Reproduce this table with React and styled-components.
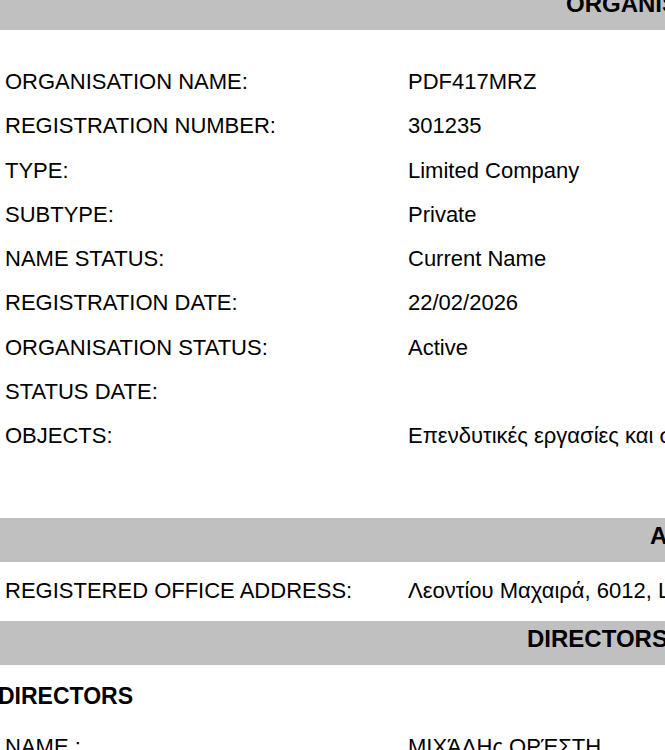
import styled, { createGlobalStyle } from "styled-components";

const GlobalStyle = createGlobalStyle`
  html, body {
    margin: 0;
    padding: 0;
    background: #ffffff;
    overflow: hidden;
  }
  body {
    font-family: "Liberation Sans", Arial, "Noto Sans", sans-serif;
    color: #000000;
  }
`;

const Page = styled.div`
  width: 100%;
  overflow: hidden;
`;

const Bar = styled.div`
  height: 44px;
  box-sizing: border-box;
  background-color: #c0c0c0;
  padding-top: 6px;
  padding-left: ${(p) => p.$inset}px;
  margin-top: ${(p) => p.$offset || 0}px;
  white-space: nowrap;
`;

const BarTitle = styled.span`
  font-size: 24px;
  line-height: 24px;
  font-weight: bold;
`;

const Section = styled.div`
  padding: ${(p) => p.$pad};
`;

const Row = styled.div`
  display: grid;
  grid-template-columns: 403px 1fr;
  padding-left: 5px;
  font-size: 22px;
  line-height: 44.25px;
  white-space: nowrap;
`;

const Label = styled.div``;

const Value = styled.div`
  overflow: hidden;
`;

const SubHeading = styled.div`
  margin: 16px 0 14px -2px;
  font-size: 23px;
  line-height: 30px;
  font-weight: bold;
`;

const organisation = [
  ["ORGANISATION NAME:", "PDF417MRZ"],
  ["REGISTRATION NUMBER:", "301235"],
  ["TYPE:", "Limited Company"],
  ["SUBTYPE:", "Private"],
  ["NAME STATUS:", "Current Name"],
  ["REGISTRATION DATE:", "22/02/2026"],
  ["ORGANISATION STATUS:", "Active"],
  ["STATUS DATE:", ""],
  ["OBJECTS:", "Επενδυτικές εργασίες και συμμετοχές"],
];

const App = () => {
  return (
    <Page>
      <GlobalStyle />
      <Bar $inset={566} $offset={-14}>
        <BarTitle>ORGANISATION DETAILS</BarTitle>
      </Bar>

      <Section $pad="30px 0 60px">
        {organisation.map(([label, value]) => (
          <Row key={label}>
            <Label>{label}</Label>
            <Value>{value}</Value>
          </Row>
        ))}
      </Section>

      <Bar $inset={650}>
        <BarTitle>ADDRESS</BarTitle>
      </Bar>

      <Section $pad="7px 0">
        <Row>
          <Label>REGISTERED OFFICE ADDRESS:</Label>
          <Value>Λεοντίου Μαχαιρά, 6012, Larnaka</Value>
        </Row>
      </Section>

      <Bar $inset={527}>
        <BarTitle>DIRECTORS / SECRETARY</BarTitle>
      </Bar>

      <SubHeading>DIRECTORS</SubHeading>

      <Row>
        <Label>NAME :</Label>
        <Value>ΜΙΧΆΛΗς ΟΡΈΣΤΗ</Value>
      </Row>
    </Page>
  );
};

export default App;
